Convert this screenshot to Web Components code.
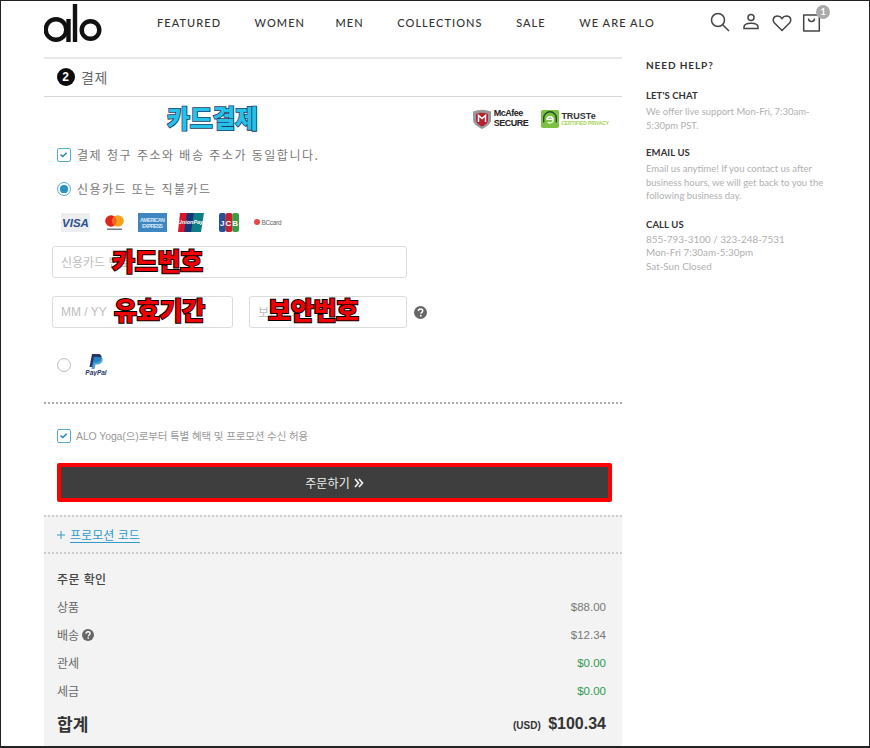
<!DOCTYPE html>
<html lang="ko"><head><meta charset="utf-8"><title>alo</title>
<style>
html,body{margin:0;padding:0;background:#fff}
body{font-family:"Noto Sans CJK KR","Noto Sans",sans-serif}
</style></head><body>
<alo-frame>
  <alo-header slot="header"></alo-header>
  <alo-checkout slot="main"></alo-checkout>
  <alo-sidebar slot="side"></alo-sidebar>
</alo-frame>
<script>
function def(name,html,setup){
  customElements.define(name,class extends HTMLElement{
    connectedCallback(){
      if(this.shadowRoot)return;
      const r=this.attachShadow({mode:'open'});
      r.innerHTML=typeof html==='function'?html(this):html;
    }
  });
}
const KR='"Noto Sans CJK KR","Noto Sans",sans-serif';
const help=(s)=>`<svg width="${s}" height="${s}" viewBox="0 0 14 14" style="display:block"><circle cx="7" cy="7" r="7" fill="#666"/><path d="M4.7 5.4c0-1.4 1-2.2 2.4-2.2s2.3.8 2.3 2c0 1.700-2 1.700-2 3.200" fill="none" stroke="#fff" stroke-width="1.600"/><rect x="6.400" y="9.600" width="1.700" height="1.700" fill="#fff"/></svg>`;

def('alo-frame',`<style>
:host{display:block;width:870px;height:748px;box-sizing:border-box;border:1px solid #222;border-bottom-width:2px;overflow:hidden;background:#fff;position:relative}
.body{display:grid;grid-template-columns:578px 1fr;column-gap:24px;padding-left:43px}
</style><slot name="header"></slot><div class="body"><slot name="main"></slot><slot name="side"></slot></div>`);

def('alo-header',`<style>
:host{display:flex;height:56px;box-sizing:border-box;padding-left:43px;align-items:flex-start;position:relative}
svg{display:block}
.logo{margin-top:2px;flex:none}
nav{display:flex;gap:33.500px;margin-left:55px;margin-top:14px;font:500 11px/16px Lato,sans-serif;letter-spacing:1.060px;color:#333;white-space:nowrap}
nav .w{margin-right:-3px}
.icons{display:flex;position:absolute;left:709px;top:11px;gap:0;align-items:flex-start}
.badge{position:absolute;left:815px;top:4px;width:14px;height:14px;border-radius:50%;background:#aaa;color:#fff;font:700 9px/14px Lato,sans-serif;text-align:center}
</style>
<svg class="logo" width="58" height="40" viewBox="0 0 58 40" fill="none" stroke="#111" stroke-width="4.400">
<circle cx="12" cy="26.500" r="10.300"/><path d="M24.500 16v23" /><path d="M31 1v38"/><circle cx="46.500" cy="27" r="8.800"/></svg>
<nav><span>FEATURED</span><span class="w">WOMEN</span><span>MEN</span><span>COLLECTIONS</span><span>SALE</span><span>WE ARE ALO</span></nav>
<div class="icons">
<svg width="20" height="20" viewBox="0 0 20 20" fill="none" stroke="#444" stroke-width="1.500"><circle cx="8" cy="8" r="6.500"/><path d="M12.700 12.700L19 19"/></svg>
<svg style="margin-left:12px" width="18" height="18" viewBox="0 0 18 18" fill="none" stroke="#444" stroke-width="1.500"><circle cx="9" cy="5.500" r="3"/><path d="M2 16.500v-1.500c0-2.500 3-3.800 7-3.800s7 1.300 7 3.800v1.500z"/></svg>
<svg style="margin-left:12px;margin-top:2px" width="20" height="18" viewBox="0 0 20 18" fill="none" stroke="#444" stroke-width="1.500"><path d="M10 16.500L2.500 9C0 6 1.500 2 5.500 2 7.800 2 9.200 3.200 10 4.500 10.800 3.200 12.200 2 14.500 2c4 0 5.500 4 3 7z"/></svg>
<svg style="margin-left:10px;margin-top:1px" width="20" height="19" viewBox="0 0 20 19" fill="none" stroke="#444" stroke-width="1.500"><path d="M1.700 2h15.600v16H1.700z" stroke-linejoin="round"/><path d="M6.500 5.500c0 4 6 4 6 0"/></svg>
</div>
<div class="badge">1</div>`);

def('alo-check',`<style>
:host{display:block;width:14px;height:14px;box-sizing:border-box;border:1.500px solid #54abd3;border-radius:2px;flex:none}
svg{display:block}
</style><svg width="11" height="11" viewBox="0 0 11 11"><path d="M2.500 5.500l2.200 2 4-3.800" fill="none" stroke="#1f86b8" stroke-width="1.500"/></svg>`);

def('alo-radio',h=>`<style>
:host{display:block;width:14px;height:14px;box-sizing:border-box;border:1.300px solid ${h.hasAttribute('on')?'#54abd3':'#bbb'};border-radius:50%;flex:none;position:relative}
i{position:absolute;inset:2.400px;border-radius:50%;background:${h.hasAttribute('on')?'#2a93c6':'transparent'}}
</style><i></i>`);

def('alo-field',h=>`<style>
:host{display:flex;flex:none;align-items:center;box-sizing:border-box;height:32px;border:1px solid #dcdcdc;border-radius:3px;padding-left:8px;font:12px/16px ${h.getAttribute('font')||KR};color:#bdbdbd;background:#fff;white-space:nowrap;overflow:hidden}
</style><slot></slot>`);

def('alo-row',h=>`<style>
:host{display:flex;justify-content:space-between;align-items:center;height:28px;font:12px/16px ${KR};color:#666}
.v{font:11.500px/16px "Liberation Sans",sans-serif;color:${h.hasAttribute('green')?'#2f9a4c':'#777'}}
.l{display:flex;align-items:center;gap:3px}
</style><span class="l"><slot></slot>${h.hasAttribute('help')?help(12):''}</span><span class="v">${h.getAttribute('v')}</span>`);

def('alo-note',h=>`<style>
:host{position:absolute;white-space:nowrap;font:800 25px/30px "Noto Sans CJK KR",sans-serif;letter-spacing:-.3px;paint-order:stroke fill;-webkit-text-stroke:${h.getAttribute('w')||'2px'} ${h.getAttribute('s')};color:${h.getAttribute('c')}}
</style><slot></slot>`);

def('alo-cards',`<style>
:host{display:flex;align-items:center;height:20px}
svg,div{display:block;flex:none}
text{font-family:"Liberation Sans",sans-serif}
</style>
<svg width="29" height="19" viewBox="0 0 29 19"><rect width="29" height="19" fill="#eceef0"/><text x="14.500" y="14" text-anchor="middle" font-size="11.500" font-weight="700" font-style="italic" fill="#2d4f8e">VISA</text></svg>
<svg style="margin-left:15px" width="19" height="19" viewBox="0 0 19 19"><circle cx="6" cy="8" r="5.800" fill="#e2231a"/><circle cx="13" cy="8" r="5.800" fill="#f7a11b"/><path d="M9.500 3.400a5.800 5.800 0 0 1 0 9.200 5.800 5.800 0 0 1 0-9.200z" fill="#f26522"/><rect x="2" y="15.500" width="15" height="1.500" fill="#777"/></svg>
<svg style="margin-left:14px" width="29" height="19" viewBox="0 0 29 19"><rect width="29" height="19" fill="#3f86c1"/><text x="14.500" y="8.500" text-anchor="middle" font-size="5.500" font-weight="700" fill="#d6e8f6" textLength="25">AMERICAN</text><text x="14.500" y="15" text-anchor="middle" font-size="5.500" font-weight="700" fill="#d6e8f6" textLength="21">EXPRESS</text></svg>
<svg style="margin-left:10px" width="27" height="19" viewBox="0 0 27 19"><path d="M3 0h8L8 19H1z" fill="#d7182a"/><path d="M10 0h8l-3 19H7z" fill="#16357a"/><path d="M17 0h10l-3 19H14z" fill="#0f7d84"/><text x="13.500" y="11" text-anchor="middle" font-size="5.500" font-style="italic" font-weight="700" fill="#fff">UnionPay</text></svg>
<svg style="margin-left:15px" width="20" height="19" viewBox="0 0 20 19"><rect width="6.800" height="19" rx="2" fill="#27509b"/><rect x="6.600" width="6.800" height="19" rx="2" fill="#c8202f"/><rect x="13.200" width="6.800" height="19" rx="2" fill="#3e9a46"/><text x="10" y="13" text-anchor="middle" font-size="8" font-weight="700" fill="#fff" textLength="18">JCB</text></svg>
<svg style="margin-left:14px" width="29" height="10" viewBox="0 0 29 10"><circle cx="4" cy="5" r="3" fill="#e2494a"/><text x="8.500" y="7.500" font-size="6.500" fill="#666" textLength="20">BCcard</text></svg>`);

def('alo-trust',`<style>
:host{display:flex;align-items:center;height:21px}
svg{display:block;flex:none}
.t{font:800 9px/9.500px "Liberation Sans",sans-serif;color:#222;margin-left:3px;letter-spacing:-.5px}
.t b{display:block}
.g{margin-left:2px;color:#333;font:700 9px/10px "Liberation Sans",sans-serif}
.g small{display:block;font:700 4.800px/6px "Liberation Sans",sans-serif;color:#9fd04a;white-space:nowrap}
</style>
<svg width="18" height="20" viewBox="0 0 18 20"><path d="M0 2.500Q9-1 18 2.500V11c0 4-5 7-9 9-4-2-9-5-9-9z" fill="#999"/><path d="M3 5Q9 2.500 15 5V11c0 3-3 5-6 6.500C6 16 3 14 3 11z" fill="#b5212c"/><path d="M5.500 13V6.500L9 9.500l3.500-3V13" fill="none" stroke="#fff" stroke-width="1.500"/></svg>
<div class="t"><b>McAfee</b><b>SECURE</b></div>
<svg style="margin-left:13px" width="18" height="20" viewBox="0 0 20 20"><rect width="20" height="20" rx="2" fill="#7cc242"/><path d="M3 14V9a7 7 0 0 1 14 0v5" fill="none" stroke="#1e4d2b" stroke-width="1.600"/><path d="M6.500 11a3.500 3.500 0 1 1 3.500 3.500c-1 0-2-.3-2.500-1M6.500 10.500h6.500" fill="none" stroke="#fff" stroke-width="1.400"/></svg>
<div class="g">TRUSTe<small>CERTIFIED PRIVACY</small></div>`);

def('alo-checkout',`<style>
:host{display:block;position:relative;height:691px;font-family:${KR}}
.rule{height:2px;background:#e8e8e8}
.step{display:flex;align-items:center;height:38px;box-sizing:border-box;border-bottom:1px solid #d8d8d8;padding-left:13px;padding-bottom:2px;color:#666;font:14px/18px ${KR};gap:6px;letter-spacing:.6px}
.num{width:18px;height:18px;border-radius:50%;background:#0c0c0c;color:#fff;font:800 12px/18px "Liberation Sans",sans-serif;text-align:center}
.trustrow{display:flex;justify-content:flex-end;padding:11px 13px 0 0;height:38px;box-sizing:border-box}
.opt{display:flex;align-items:center;gap:6px;padding-left:13px;font:12px/16px ${KR};color:#777;letter-spacing:1.500px;height:16px}
.same{margin-top:12px}
.pay{margin-top:18px;letter-spacing:1.450px}
alo-cards{margin:15px 0 0 17px}
.fields{margin:14px 0 0 8px;width:355px}
.split{display:flex;margin-top:18px;align-items:center}
.split alo-field:first-child{width:181px;font-weight:500}
.split alo-field:nth-child(2){width:158px;margin-left:16px}
.split .h{margin-left:7px;flex:none}
.pp{display:flex;align-items:center;padding-left:13px;margin-top:25px;height:24px;gap:14px}
.dots{border-top:2px dotted #aaa;height:0}
.marketing{display:flex;align-items:center;gap:5px;padding-left:13px;margin-top:25px;font:10.500px/14px "Liberation Sans",${KR};color:#999;height:14px;white-space:nowrap;letter-spacing:-.12px}
.btnrow{margin:20px 10px 0 13px}
.btn{box-sizing:border-box;height:39px;background:#3e3e3e;border:4px solid #f00;border-radius:2px;display:flex;align-items:center;justify-content:center;gap:4px;color:#eee;font:12px/16px ${KR};letter-spacing:.1px}
.panel{margin-top:13px;background:#f3f3f3;height:232px;border-top:2px dotted #ccc;box-sizing:border-box}
.promo{height:35px;border-bottom:2px dotted #ccc;display:flex;align-items:center;padding-left:13px;font:12px/16px ${KR};color:#2f9bcb;gap:5px;letter-spacing:.05px}
.promo u{text-underline-offset:2px}
.sum{padding:17px 16px 0 13px}
.title{font:500 12px/16px ${KR};color:#444;height:18px;letter-spacing:.4px;margin-bottom:4px}
.total{display:flex;justify-content:space-between;align-items:center;margin-top:3px;height:32px;color:#333}
.total b{font:700 17px/22px ${KR}}
.total span{font:700 16px/20px "Liberation Sans",sans-serif}
.total small{font:700 10px/12px "Liberation Sans",sans-serif;margin-right:3px}
</style>
<div class="rule"></div>
<div class="step"><div class="num">2</div><span>결제</span></div>
<div class="trustrow"><alo-trust></alo-trust></div>
<div class="opt same"><alo-check></alo-check><span>결제 청구 주소와 배송 주소가 동일합니다.</span></div>
<div class="opt pay"><alo-radio on></alo-radio><span>신용카드 또는 직불카드</span></div>
<alo-cards></alo-cards>
<div class="fields">
  <alo-field>신용카드 번호</alo-field>
  <div class="split"><alo-field font='"Liberation Sans",sans-serif'>MM / YY</alo-field><alo-field>보안코드</alo-field><div class="h">${help(13)}</div></div>
</div>
<div class="pp"><alo-radio></alo-radio>
<svg width="22" height="22" viewBox="0 0 22 22"><path d="M7 0h6c3 0 4 2 3.500 4-.6 3-3 4.500-6 4.500H8.500L7.500 13H4.500z" fill="#27346a"/><path d="M9 3h5.500c2.500 0 3.500 1.500 3 3.500-.6 2.600-3 4-5.500 4h-1.500L9.500 15h-3z" fill="#2a8fd0" opacity=".85"/><text x="11" y="21" text-anchor="middle" font-family="Liberation Sans" font-size="6.500" font-weight="700" font-style="italic" fill="#27346a">PayPal</text></svg></div>
<div class="dots" style="margin-top:25px"></div>
<div class="marketing"><alo-check></alo-check><span>ALO Yoga(으)로부터 특별 혜택 및 프로모션 수신 허용</span></div>
<div class="btnrow"><div class="btn"><span>주문하기</span><svg width="10" height="10" viewBox="0 0 10 10" fill="none" stroke="#eee" stroke-width="1.700"><path d="M1 1l3.500 4L1 9M5 1l3.500 4L5 9"/></svg></div></div>
<div class="panel">
  <div class="promo"><svg width="8" height="8" viewBox="0 0 8 8" stroke="#2f9bcb" stroke-width="1"><path d="M4 0v8M0 4h8"/></svg><u>프로모션 코드</u></div>
  <div class="sum">
    <div class="title">주문 확인</div>
    <alo-row v="$88.00">상품</alo-row>
    <alo-row v="$12.34" help>배송</alo-row>
    <alo-row v="$0.00" green>관세</alo-row>
    <alo-row v="$0.00" green>세금</alo-row>
    <div class="total"><b>합계</b><span><small>(USD)</small> $100.34</span></div>
  </div>
</div>
<alo-note style="left:123px;top:45px" c="#27c0e6" s="#1a3a66" w="1.600px">카드결제</alo-note>
<alo-note style="left:68px;top:188px" c="#f00000" s="#000">카드번호</alo-note>
<alo-note style="left:70px;top:237px" c="#f00000" s="#000">유효기간</alo-note>
<alo-note style="left:224px;top:237px" c="#f00000" s="#000">보안번호</alo-note>`);

def('alo-sidebar',`<style>
:host{display:block;font:400 9.500px/13.500px Lato,sans-serif;color:#b0b0b0;padding-top:1px}
h3{margin:0;font:700 10px/14px Lato,sans-serif;letter-spacing:.9px;color:#333}
h4{margin:0;font:700 9.500px/14px Lato,sans-serif;letter-spacing:.1px;color:#333}
section{margin-top:17px}
section+section{margin-top:14px}
section:last-child{margin-top:15px}
section:last-child p{margin-top:1px;font-size:9.900px}
p{margin:2px 0 0;white-space:nowrap}
</style>
<h3>NEED HELP?</h3>
<section><h4>LET'S CHAT</h4><p>We offer live support Mon-Fri, 7:30am-<br>5:30pm PST.</p></section>
<section><h4>EMAIL US</h4><p>Email us anytime! If you contact us after<br>business hours, we will get back to you the<br>following business day.</p></section>
<section><h4>CALL US</h4><p>855-793-3100 / 323-248-7531<br>Mon-Fri 7:30am-5:30pm<br>Sat-Sun Closed</p></section>`);
</script>
</body></html>
